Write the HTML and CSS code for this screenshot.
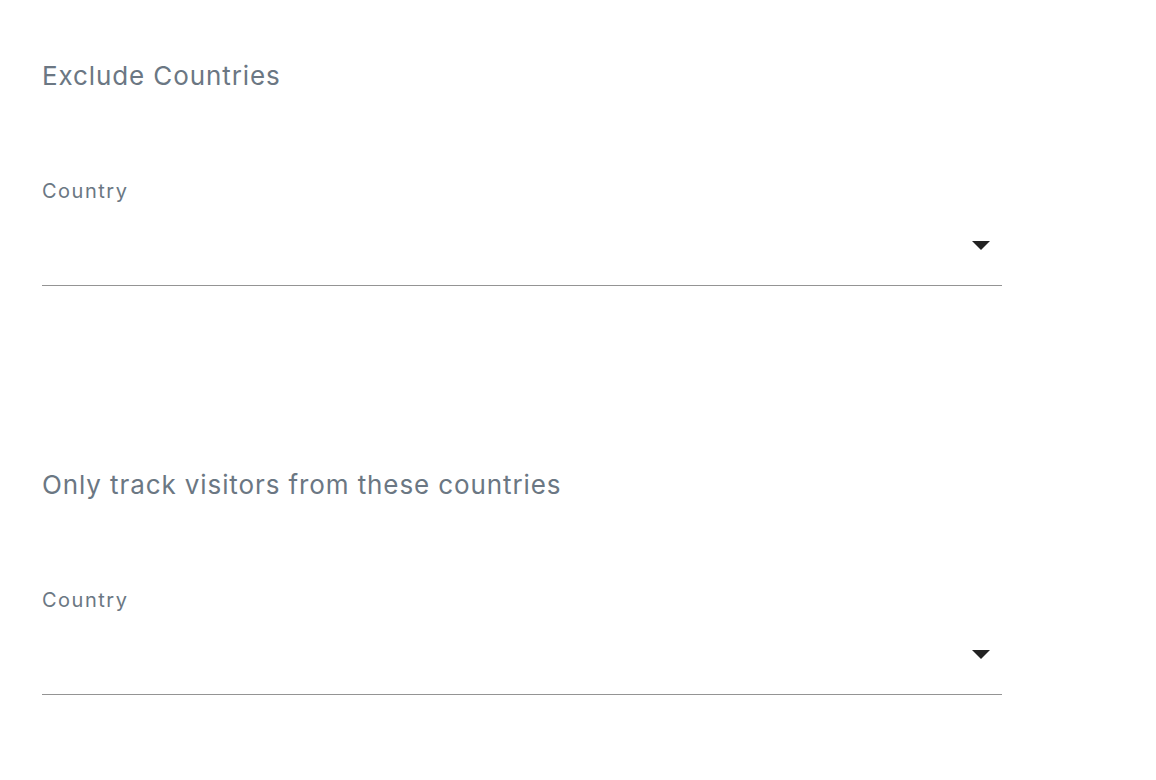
FILE: index.html
```html
<!DOCTYPE html>
<html>
<head>
<meta charset="utf-8">
<link rel="stylesheet" href="styles.css">
</head>
<body>
<div class="page">
  <section class="group">
    <h2 class="group-title">Exclude Countries</h2>
    <div class="field">
      <label class="field-label">Country</label>
      <div class="select">
        <span class="select-value"></span>
        <svg class="select-arrow" viewBox="0 0 18 9" width="18" height="9"><path d="M0 0h18L9 9z" fill="#222"/></svg>
      </div>
    </div>
  </section>
  <section class="group">
    <h2 class="group-title">Only track visitors from these countries</h2>
    <div class="field">
      <label class="field-label">Country</label>
      <div class="select">
        <span class="select-value"></span>
        <svg class="select-arrow" viewBox="0 0 18 9" width="18" height="9"><path d="M0 0h18L9 9z" fill="#222"/></svg>
      </div>
    </div>
  </section>
</div>
</body>
</html>
```
FILE: styles.css
```css
html, body {
  margin: 0;
  padding: 0;
  background: #fff;
}
body {
  font-family: Inter, "Liberation Sans", sans-serif;
  color: #6b7783;
}
.page {
  padding: 58px 0 0 42px;
  width: 960px;
  display: flex;
  flex-direction: column;
  gap: 181px;
}
.group {
  display: flex;
  flex-direction: column;
}
.group-title {
  margin: 0;
  font-size: 26px;
  font-weight: 400;
  line-height: 36px;
  letter-spacing: 0.9px;
  color: #6b7783;
}
.field {
  margin-top: 83px;
  display: flex;
  flex-direction: column;
}
.field-label {
  font-size: 20px;
  line-height: 28px;
  letter-spacing: 1.5px;
  color: #6b7783;
}
.select {
  height: 80px;
  border-bottom: 1px solid #949494;
  display: flex;
  align-items: center;
  justify-content: space-between;
  padding-right: 12px;
}
.select-arrow {
  display: block;
}
```
